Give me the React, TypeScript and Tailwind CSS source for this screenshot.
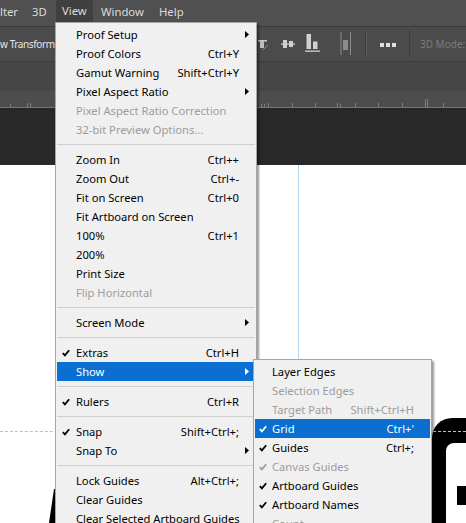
import React from "react";

type Row = {
  t: string;
  k?: string;
  c?: boolean;
  a?: boolean;
  d?: boolean;
  h?: boolean;
} | null;

const mainItems: Row[] = [
  { t: "Proof Setup", a: true },
  { t: "Proof Colors", k: "Ctrl+Y" },
  { t: "Gamut Warning", k: "Shift+Ctrl+Y" },
  { t: "Pixel Aspect Ratio", a: true },
  { t: "Pixel Aspect Ratio Correction", d: true },
  { t: "32-bit Preview Options...", d: true },
  null,
  { t: "Zoom In", k: "Ctrl++" },
  { t: "Zoom Out", k: "Ctrl+-" },
  { t: "Fit on Screen", k: "Ctrl+0" },
  { t: "Fit Artboard on Screen" },
  { t: "100%", k: "Ctrl+1" },
  { t: "200%" },
  { t: "Print Size" },
  { t: "Flip Horizontal", d: true },
  null,
  { t: "Screen Mode", a: true },
  null,
  { t: "Extras", k: "Ctrl+H", c: true },
  { t: "Show", a: true, h: true },
  null,
  { t: "Rulers", k: "Ctrl+R", c: true },
  null,
  { t: "Snap", k: "Shift+Ctrl+;", c: true },
  { t: "Snap To", a: true },
  null,
  { t: "Lock Guides", k: "Alt+Ctrl+;" },
  { t: "Clear Guides" },
  { t: "Clear Selected Artboard Guides" },
];

const subItems: Row[] = [
  { t: "Layer Edges" },
  { t: "Selection Edges", d: true },
  { t: "Target Path", k: "Shift+Ctrl+H", d: true },
  { t: "Grid", k: "Ctrl+'", c: true, h: true },
  { t: "Guides", k: "Ctrl+;", c: true },
  { t: "Canvas Guides", c: true, d: true },
  { t: "Artboard Guides", c: true },
  { t: "Artboard Names", c: true },
  { t: "Count", d: true },
];

function Check() {
  return (
    <svg width="8" height="8" viewBox="0 0 8 8" className="block">
      <path d="M0.8 4.2 L2.9 6.4 L7.2 1.2" fill="none" stroke="currentColor" strokeWidth="1.8" />
    </svg>
  );
}

function Arrow() {
  return (
    <svg width="4" height="7" viewBox="0 0 4 7" className="block">
      <polygon points="0,0 4,3.5 0,7" fill="currentColor" />
    </svg>
  );
}

function MenuRow({ r, sub }: { r: NonNullable<Row>; sub?: boolean }) {
  const color = r.h ? "text-white" : r.d ? "text-[#9c9c9c]" : "text-black";
  const bg = r.h ? "bg-[#0b6fd1]" : "";
  return (
    <div className={`mx-px flex h-[19px] items-center leading-[19px] ${bg} ${color} ${sub ? "pl-[4px]" : "pl-[5px]"}`}>
      <div className={`flex shrink-0 items-center ${sub ? "w-[13px]" : "w-[14px]"}`}>{r.c ? <Check /> : null}</div>
      <div className="flex-1 whitespace-nowrap">{r.t}</div>
      {r.k ? <div className="shrink-0 whitespace-nowrap">{r.k}</div> : null}
      <div className="flex w-[16px] shrink-0 items-center pl-[6px]">{r.a ? <Arrow /> : null}</div>
    </div>
  );
}

function Sep() {
  return (
    <div className="flex h-[11px] items-center">
      <div className="mx-px h-px w-full bg-[#cfcfcf]" />
    </div>
  );
}

function Ruler() {
  const ticks: [number, number][] = [
    [10, 3], [27, 4], [30, 4], [261, 3], [264, 3], [268, 4], [292, 4], [315, 4], [337, 4],
    [340, 3], [355, 4], [378, 4], [402, 4], [425, 8], [427, 8], [443, 4],
  ];
  return (
    <svg width="466" height="16" className="block bg-[#4d4d4d]">
      {ticks.map(([x, h], i) => (
        <line key={i} x1={x + 0.5} x2={x + 0.5} y1={16 - h} y2={16} stroke="#7c7c7c" strokeWidth="1" />
      ))}
    </svg>
  );
}

function ToolIcons() {
  return (
    <svg width="152" height="34" viewBox="258 27 152 34" className="block">
      <rect x="258" y="40" width="9" height="1.5" fill="#c9c9c9" />
      <rect x="260" y="41" width="4" height="7" fill="#bdbdbd" />
      <line x1="263" y1="50" x2="268" y2="45" stroke="#8a8a8a" strokeWidth="1" />
      <rect x="281" y="43.5" width="14" height="1.3" fill="#d0d0d0" />
      <rect x="283" y="40" width="4" height="8" fill="#d0d0d0" />
      <rect x="289" y="41" width="4" height="6" fill="#d0d0d0" />
      <rect x="306.5" y="34" width="4.5" height="15" fill="#d0d0d0" />
      <rect x="313" y="41.5" width="4.5" height="7.5" fill="#d0d0d0" />
      <rect x="305" y="50.5" width="15" height="1.3" fill="#d0d0d0" />
      <rect x="340.5" y="32" width="1" height="23" fill="#8c8c8c" />
      <rect x="350" y="32" width="1" height="23" fill="#8c8c8c" />
      <rect x="343" y="40" width="5" height="10" fill="#8c8c8c" />
      <rect x="365" y="30" width="1" height="27" fill="#3c3c3c" />
      <rect x="366" y="30" width="1" height="27" fill="#5a5a5a" />
      <rect x="380" y="43" width="4" height="4" fill="#dedede" />
      <rect x="386" y="43" width="4" height="4" fill="#dedede" />
      <rect x="392" y="43" width="4" height="4" fill="#dedede" />
      <rect x="409" y="30" width="1" height="27" fill="#3c3c3c" />
    </svg>
  );
}

export default function App() {
  return (
    <div className="relative h-[523px] w-[466px] overflow-hidden bg-[#282828] font-['Noto_Sans',sans-serif]">
      {/* menu bar */}
      <div className="flex h-[26px] items-start bg-[#505050] text-[11.3px] text-[#dcdcdc]">
        <div className="flex h-[24px] w-[32px] items-center">lter</div>
        <div className="flex h-[24px] w-[24px] items-center">3D</div>
        <div className="flex h-[22px] w-[37px] items-center bg-[#404040] pl-[6px]">View</div>
        <div className="w-[8px]" />
        <div className="flex h-[24px] w-[58px] items-center">Window</div>
        <div className="flex h-[24px] items-center">Help</div>
      </div>
      <div className="h-px bg-[#3a3a3a]" />
      {/* options bar */}
      <div className="flex h-[34px] items-center bg-[#4b4b4b]">
        <div className="w-[258px] whitespace-nowrap text-[10px] tracking-[-0.4px] text-[#e4e4e4]">w Transform</div>
        <ToolIcons />
        <div className="ml-[10px] whitespace-nowrap text-[10px] text-[#7d7d7d]">3D Mode:</div>
      </div>
      <div className="h-px bg-[#3c3c3c]" />
      <div className="h-[29px] bg-[#464646]" />
      <Ruler />
      <div className="h-px bg-[#767676]" />
      <div className="h-[57px] bg-[#282828]" />
      {/* canvas */}
      <div className="relative h-[358px] bg-white">
        <div className="absolute left-[298px] top-0 h-full w-px bg-[#b3d6ee]" />
        <div className="absolute left-[432px] top-[253px] h-[120px] w-[60px] rounded-tl-[20px] bg-black" />
        <div className="absolute left-[446px] top-[278px] h-[100px] w-[40px] rounded-tl-[8px] bg-white" />
        <div className="absolute left-[457px] top-[321px] h-[19px] w-[20px] bg-black" />
        <div className="absolute left-0 top-[266px] w-full border-t border-dashed border-[#9ccbea]" />
        <svg width="10" height="34" viewBox="0 0 10 34" className="absolute left-[46px] top-[324px]">
          <polygon points="8,0 10,0 10,34 3,34" fill="#000" />
        </svg>
      </div>

      {/* View menu */}
      <div className="absolute left-[55px] top-[22px] w-[202px] border border-[#a5a5a5] bg-[#f0f0f0] pt-[2px] text-[11.2px] shadow-[2px_2px_2px_rgba(0,0,0,0.4)]">
        {mainItems.map((r, i) => (r ? <MenuRow key={i} r={r} /> : <Sep key={i} />))}
      </div>

      {/* Show submenu */}
      <div className="absolute left-[253px] top-[359px] w-[179px] border border-[#a5a5a5] bg-[#f0f0f0] pt-[2px] text-[11.2px] shadow-[2px_2px_2px_rgba(0,0,0,0.4)]">
        {subItems.map((r, i) => (r ? <MenuRow key={i} r={r} sub /> : <Sep key={i} />))}
      </div>
    </div>
  );
}
